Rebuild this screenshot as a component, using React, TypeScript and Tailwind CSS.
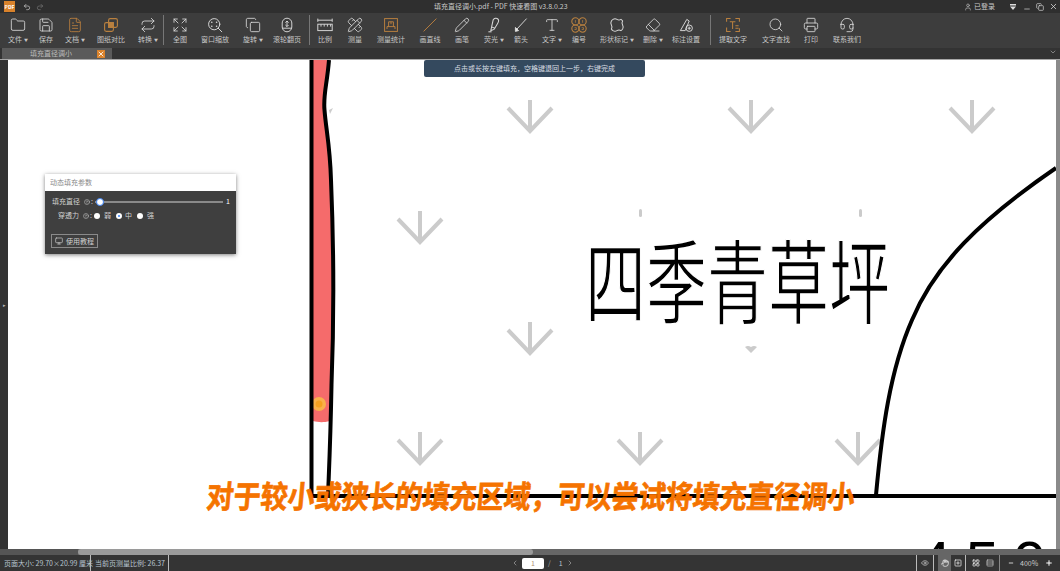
import {
  ChevronDown,
  ChevronLeft,
  ChevronRight,
  CircleHelp,
  Copy,
  Expand,
  Eraser,
  Eye,
  FileText,
  Folder,
  Hand,
  Headset,
  LayoutGrid,
  Minus,
  Monitor,
  Pencil,
  PencilRuler,
  Plus,
  Printer,
  Redo2,
  Repeat,
  Rows3,
  Save,
  Search,
  SquarePlus,
  Type,
  Undo2,
  User,
  X,
} from "lucide-react";

const FONT = "font-['Noto_Sans_CJK_SC','Noto_Sans',sans-serif]";

function CompareIcon() {
  return (
    <svg viewBox="0 0 20 20" className="h-4 w-4 fill-none stroke-[#b9803f] stroke-[1.4]">
      <rect x="2" y="7" width="11" height="11" rx="2" />
      <rect x="7" y="2" width="11" height="11" rx="2" />
      <rect x="7" y="7" width="6" height="6" className="fill-[#b9803f]" />
    </svg>
  );
}

function ZoomWindowIcon() {
  return (
    <svg viewBox="0 0 20 20" className="h-4 w-4 fill-none stroke-[#d8d8d8] stroke-[1.2]" strokeLinecap="round">
      <circle cx="9" cy="9" r="7" />
      <path d="M14 14l4.500 4.500" />
      <path d="M6 6.500h.01M12 6.500h.01M6 11.500h.01M12 11.500h.01" strokeWidth="2" />
    </svg>
  );
}

function WheelIcon() {
  return (
    <svg viewBox="0 0 20 20" className="h-4 w-4 fill-none stroke-[#d8d8d8] stroke-[1.2]">
      <rect x="4" y="1.500" width="12" height="17" rx="6" />
      <path d="M10 5v7M8 7l2-2 2 2M8 10l2 2 2-2" />
      <path d="M4 14h12" />
    </svg>
  );
}

function ScaleIcon() {
  return (
    <svg viewBox="0 0 20 20" className="h-4 w-4 fill-none stroke-[#d8d8d8] stroke-[1.2]">
      <path d="M1 4h18M1 2v4M19 2v4" />
      <rect x="1" y="9" width="18" height="8" />
      <path d="M5 9v3M9 9v3M13 9v3M17 9v3" />
    </svg>
  );
}

function StatsIcon() {
  return (
    <svg viewBox="0 0 20 20" className="h-4 w-4 fill-none stroke-[#b9803f] stroke-[1.2]">
      <rect x="2" y="2" width="16" height="16" />
      <path d="M5 15v-3h10v3M7 12V6h6v6M10 6v3" />
    </svg>
  );
}

function LineIcon() {
  return (
    <svg viewBox="0 0 20 20" className="h-4 w-4 fill-none stroke-[#b9803f] stroke-[1.2]">
      <path d="M2 18L18 2" />
    </svg>
  );
}

function HighlightIcon() {
  return (
    <svg viewBox="0 0 20 20" className="h-4 w-4 fill-none stroke-[#d8d8d8] stroke-[1.3]">
      <path d="M9 3.500c1.500-2 4-2.500 5.500-1.300s1.500 3.500.2 5.500L11 14l-4-1.500z" />
      <path d="M7 12.500L6 17l4-1.500 1-1.500" />
      <path d="M3 18.500h4" />
    </svg>
  );
}

function ArrowToolIcon() {
  return (
    <svg viewBox="0 0 20 20" className="h-4 w-4 fill-none stroke-[#d8d8d8] stroke-[1.2]">
      <path d="M5 15L17 2" />
      <path d="M3 13l4 4-4 1z" className="fill-[#e8e8e8]" />
    </svg>
  );
}

function NumberIcon() {
  return (
    <svg viewBox="0 0 20 20" className="h-[18px] w-[18px] fill-none stroke-[#b9803f] stroke-[1.2]">
      <circle cx="6" cy="6" r="4" />
      <circle cx="14" cy="6" r="4" />
      <circle cx="6" cy="14" r="4" />
      <circle cx="14" cy="14" r="4" />
      <path d="M6 4.500v3M14 4.500v3M5 13h2v2H5M13 13h2v2h-2" strokeWidth="0.8" />
    </svg>
  );
}

function ShapeIcon() {
  return (
    <svg viewBox="0 0 20 20" className="h-4 w-4 fill-none stroke-[#d8d8d8] stroke-[1.3]">
      <path d="M5 3q2.500-1.500 5 0t5 0q1.500 1 2 2-1.500 2.500 0 5t0 5q-1 1.500-2 2-2.500-1.500-5 0t-5 0q-1.500-1-2-2 1.500-2.500 0-5t0-5q1-1.500 2-2z" />
    </svg>
  );
}

function MarkSettingIcon() {
  return (
    <svg viewBox="0 0 20 20" className="h-4 w-4 fill-none stroke-[#d8d8d8] stroke-[1.2]">
      <path d="M3 17L11 3l3 2-5 12z" />
      <circle cx="14" cy="14" r="4" />
      <path d="M14 12v4M12 14h4" />
    </svg>
  );
}

function ExtractIcon() {
  return (
    <svg viewBox="0 0 20 20" className="h-4 w-4 fill-none stroke-[#b9803f] stroke-[1.3]">
      <path d="M2 6V2h5M13 2h5v4M2 13v5h5M13 18h5v-4" />
      <path d="M6 6h7M9.500 6v9M13 11h4M13 14h4" />
    </svg>
  );
}

const ICON = "h-4 w-4 text-[#d8d8d8]";
const GOLD = "h-4 w-4 text-[#b9803f]";

const TOOLS = [
  { label: "文件", caret: true, icon: <Folder className={ICON} strokeWidth={1.3} />, className: "ml-[6px]" },
  { label: "保存", icon: <Save className={ICON} strokeWidth={1.3} />, className: "ml-[4px]" },
  { label: "文档", caret: true, icon: <FileText className={GOLD} strokeWidth={1.3} />, className: "ml-[5px]" },
  { label: "图纸对比", icon: <CompareIcon />, className: "ml-[12px]" },
  { label: "转换", caret: true, icon: <Repeat className={ICON} strokeWidth={1.3} />, className: "ml-[13px]" },
  { sep: true, className: "ml-[3px]" },
  { label: "全图", icon: <Expand className={ICON} strokeWidth={1.3} />, className: "ml-[4px]" },
  { label: "窗口缩放", icon: <ZoomWindowIcon />, className: "ml-[11px]" },
  { label: "旋转", caret: true, icon: <Copy className={ICON} strokeWidth={1.3} />, className: "ml-[14px]" },
  { label: "滚轮翻页", icon: <WheelIcon />, className: "ml-[10px]" },
  { sep: true, className: "ml-[10px]" },
  { label: "比例", icon: <ScaleIcon />, className: "ml-[3px]" },
  { label: "测量", icon: <PencilRuler className={ICON} strokeWidth={1.3} />, className: "ml-[6px]" },
  { label: "测量统计", icon: <StatsIcon />, className: "ml-[12px]" },
  { label: "画直线", icon: <LineIcon />, className: "ml-[15px]" },
  { label: "画笔", icon: <Pencil className={ICON} strokeWidth={1.3} />, className: "ml-[8px]" },
  { label: "荧光", caret: true, icon: <HighlightIcon />, className: "ml-[8px]" },
  { label: "箭头", icon: <ArrowToolIcon />, className: "ml-[3px]" },
  { label: "文字", caret: true, icon: <Type className={ICON} strokeWidth={1.3} />, className: "ml-[7px]" },
  { label: "编号", icon: <NumberIcon />, className: "ml-[3px]" },
  { label: "形状标记", caret: true, icon: <ShapeIcon />, className: "ml-[14px]" },
  { label: "删除", caret: true, icon: <Eraser className={ICON} strokeWidth={1.3} />, className: "ml-[12px]" },
  { label: "标注设置", icon: <MarkSettingIcon />, className: "ml-[9px]" },
  { sep: true, className: "ml-[12px]" },
  { label: "提取文字", icon: <ExtractIcon />, className: "ml-[10px]" },
  { label: "文字查找", icon: <Search className={ICON} strokeWidth={1.3} />, className: "ml-[19px]" },
  { label: "打印", icon: <Printer className={ICON} strokeWidth={1.3} />, className: "ml-[11px]" },
  { label: "联系我们", icon: <Headset className={ICON} strokeWidth={1.3} />, className: "ml-[12px]" },
];

const WATERMARKS = [
  [530, 131],
  [751, 131],
  [972, 131],
  [420, 242],
  [530, 353],
  [420, 463],
  [640, 463],
  [858, 463],
];

function TitleBar() {
  return (
    <div className="flex h-[13px] shrink-0 items-center bg-[#2f2f2f] text-[7px] leading-none text-[#c8c8c8]">
      <div className="ml-1 flex h-[11px] w-[11px] items-center justify-center bg-[#d9822b] text-[5px] font-bold text-white">
        PDF
      </div>
      <Undo2 className="ml-[8px] h-2 w-2 text-[#cfcfcf]" />
      <Redo2 className="ml-[5px] h-2 w-2 text-[#777]" />
      <div className="ml-[390px] whitespace-nowrap">填充直径调小.pdf - PDF 快速看图 v3.8.0.23</div>
      <div className="ml-auto flex items-center">
        <User className="h-2 w-2 text-[#bbb]" />
        <span className="ml-[2px]">已登录</span>
        <svg viewBox="0 0 8 8" className="ml-[14px] h-2 w-2 fill-[#ddd]">
          <path d="M1 1h6v1.500H1zM1 3.500h6L4 7z" />
        </svg>
        <Minus className="ml-[6px] h-2 w-2 translate-y-[2px] text-[#ddd]" />
        <Copy className="ml-[5px] h-2 w-2 text-[#ddd]" />
        <X className="mx-[2px] ml-[5px] h-[9px] w-[9px] text-[#ddd]" />
      </div>
    </div>
  );
}

function Toolbar() {
  return (
    <div className="flex h-[35px] shrink-0 items-start bg-[#3d3d3d] text-[7px] leading-none text-[#c6c6c6]">
      {TOOLS.map((tool, i) =>
        tool.sep ? (
          <div key={i} className={`mt-[2px] h-[30px] w-px shrink-0 bg-[#777] ${tool.className}`} />
        ) : (
          <div key={i} className={`flex w-6 shrink-0 flex-col items-center whitespace-nowrap ${tool.className}`}>
            <div className="mt-[4px] flex h-4 items-center">{tool.icon}</div>
            <div className="mt-[3px] flex items-center">
              {tool.label}
              {tool.caret && <span className="ml-[2px] text-[4px]">▼</span>}
            </div>
          </div>
        ),
      )}
    </div>
  );
}

function TabStrip() {
  return (
    <div className="flex h-3 shrink-0 border-b border-[#a8a8a8] bg-[#333] text-[7px] leading-none text-[#bbb]">
      <div className="ml-[2px] flex w-[110px] items-center bg-[#5a5a5a]">
        <span className="ml-[28px]">填充直径调小</span>
        <div className="ml-auto mr-[7px] flex h-2 w-2 items-center justify-center bg-[#d9822b]">
          <X className="h-2 w-2 text-white" strokeWidth={2.5} />
        </div>
      </div>
      <ChevronDown className="ml-auto mr-[1px] h-2 w-3 text-[#aaa]" />
    </div>
  );
}

function Drawing() {
  return (
    <svg viewBox="8 60 1048 489" className="absolute inset-0 h-full w-full">
      {WATERMARKS.map(([x, y]) => (
        <path
          key={`${x}-${y}`}
          d={`M${x} ${y - 31}V${y}M${x - 22} ${y - 23}L${x} ${y}L${x + 22} ${y - 23}`}
          fill="none"
          stroke="#cbcbcb"
          strokeWidth="4"
        />
      ))}
      <rect x="639" y="209" width="3" height="8" rx="1.500" fill="#cbcbcb" />
      <rect x="859" y="209" width="3" height="8" rx="1.500" fill="#cbcbcb" />
      <path d="M745 347q3-2 6 0q3-2 6 0l-6 6z" fill="#cbcbcb" />
      <path d="M329 110l4-2-3 6z" fill="#cbcbcb" />

      {/* filled area */}
      <path
        d="M313 60H329C327 85 323 95 324.500 110C326 130 330 145 331 180C333.500 240 334 320 331.500 385L330 421C322 423 318 422 313 421Z"
        fill="#f56b6b"
      />
      <circle cx="319" cy="404" r="7" fill="#f9b04a" />
      <circle cx="319" cy="404" r="3.500" fill="#f5a020" />

      {/* outlines */}
      <path d="M311.500 60V496H1056" fill="none" stroke="#000" strokeWidth="4" />
      <path
        d="M329 60C327 85 323 95 324.500 110C326 130 330 145 331 180C333.500 240 334 320 331.500 385C330.500 440 329 470 328 496"
        fill="none"
        stroke="#000"
        strokeWidth="4"
      />
      <path
        d="M876 495C882 430 890 370 912 320C935 265 980 220 1056 168"
        fill="none"
        stroke="#000"
        strokeWidth="4"
      />
    </svg>
  );
}

function ParamPanel() {
  return (
    <div className="absolute left-[37px] top-[114px] h-[80px] w-[191px] bg-[#3f3f3f] text-[7px] leading-none text-[#d0d0d0] shadow-[0_1px_4px_rgba(0,0,0,0.5)]">
      <div className="flex h-[17px] items-center bg-white pl-[5px] text-[#888]">动态填充参数</div>
      <div className="ml-[7px] mt-[7px] flex items-center">
        <span>填充直径</span>
        <CircleHelp className="ml-[4px] h-[6px] w-[6px]" />
        <span className="ml-[1px] mr-[2px]">:</span>
        <div className="relative h-[2px] w-[128px] bg-[#8a8a8a]">
          <div className="absolute left-[1px] top-[-3px] h-2 w-2 rounded-full border border-[#3b82f6] bg-white" />
        </div>
        <span className="ml-[3px] text-white">1</span>
      </div>
      <div className="ml-[13px] mt-[7px] flex items-center">
        <span>穿透力</span>
        <CircleHelp className="ml-[4px] h-[6px] w-[6px]" />
        <span className="ml-[1px] mr-[2px]">:</span>
        <div className="h-[6px] w-[6px] rounded-full bg-white" />
        <span className="ml-[4px]">弱</span>
        <div className="ml-[5px] h-[6px] w-[6px] rounded-full border-2 border-white bg-[#3b82f6]" />
        <span className="ml-[3px]">中</span>
        <div className="ml-[5px] h-[6px] w-[6px] rounded-full bg-white" />
        <span className="ml-[4px]">强</span>
      </div>
      <div className="ml-[6px] mt-[15px] flex h-[14px] w-[47px] items-center justify-center gap-[3px] border border-[#8a8a8a]">
        <Monitor className="h-2 w-2" />
        使用教程
      </div>
    </div>
  );
}

function Canvas() {
  return (
    <div className="relative min-w-0 flex-1 overflow-hidden bg-white">
      <Drawing />

      {/* handwritten lettering on the sheet */}
      <div className="absolute left-[577px] top-[187px] flex scale-y-[1.5] font-['Noto_Sans_CJK_SC',sans-serif] text-[61px] leading-none text-black [-webkit-text-stroke:1px_white]">
        四季青草坪
      </div>
      <div className="absolute left-[910px] top-[473px] flex gap-[14px] font-['Liberation_Sans',sans-serif] text-[60px] leading-none text-black">
        <span>4</span>
        <span>5</span>
        <span>0</span>
      </div>

      <div className="absolute left-[199px] top-[421px] -skew-x-[6deg] scale-y-[1.15] whitespace-nowrap text-[27px] font-bold leading-none text-[#f57300] [-webkit-text-stroke:0.6px_#f57300]">
        对于较小或狭长的填充区域，可以尝试将填充直径调小
      </div>

      <div className="absolute left-[416px] top-0 flex h-[17px] w-[221px] items-center justify-center rounded-[2px] bg-[#34495e] text-[7px] leading-none text-[#d8dde2]">
        点击或长按左键填充，空格键退回上一步，右键完成
      </div>

      <ParamPanel />
    </div>
  );
}

function StatusBar() {
  return (
    <div className="flex h-4 shrink-0 items-center bg-[#343434] text-[7px] leading-none text-[#b8c4d0]">
      <div className="ml-1 w-[86px] whitespace-nowrap">页面大小: 29.70×20.99 厘米</div>
      <div className="h-full w-px bg-[#bbb]" />
      <div className="ml-[4px] w-[73px] whitespace-nowrap">当前页测量比例: 26.37</div>
      <div className="h-full w-px bg-[#bbb]" />
      <ChevronLeft className="ml-[342px] h-2 w-2 text-[#aaa]" />
      <div className="ml-[3px] flex h-[11px] w-[22px] items-center justify-center rounded-[2px] bg-white text-[#b09070]">1</div>
      <span className="ml-[4px] text-[#aaa]">/</span>
      <span className="ml-[8px]">1</span>
      <ChevronRight className="ml-[3px] h-2 w-2 text-[#aaa]" />
      <div className="ml-auto flex h-full items-center text-[#ccc]">
        <div className="h-full w-px bg-[#bbb]" />
        <div className="flex w-4 justify-center">
          <Eye className="h-2 w-2" />
        </div>
        <div className="h-full w-px bg-[#bbb]" />
        <div className="ml-[4px] flex h-full w-[13px] items-center justify-center bg-[#666]">
          <Hand className="h-2 w-2 text-white" />
        </div>
        <div className="flex w-[14px] justify-center">
          <SquarePlus className="h-2 w-2 text-white" />
        </div>
        <div className="h-full w-px bg-[#bbb]" />
        <div className="ml-[3px] flex w-[14px] justify-center">
          <LayoutGrid className="h-2 w-2 text-white" />
        </div>
        <div className="flex w-[14px] justify-center">
          <Rows3 className="h-2 w-2" />
        </div>
        <div className="ml-[2px] h-full w-px bg-[#888]" />
        <Minus className="ml-[8px] h-[6px] w-[6px] text-white" strokeWidth={3} />
        <span className="ml-[6px] w-[20px] whitespace-nowrap">400%</span>
        <Plus className="ml-[5px] mr-[7px] h-2 w-2 text-white" strokeWidth={3} />
      </div>
    </div>
  );
}

export default function App() {
  return (
    <div className={`flex h-screen w-screen flex-col overflow-hidden bg-[#333] ${FONT}`}>
      <TitleBar />
      <Toolbar />
      <TabStrip />
      <div className="flex min-h-0 flex-1">
        <div className="flex w-2 shrink-0 items-center justify-center bg-[#333]">
          <span className="text-[5px] text-[#bbb]">▸</span>
        </div>
        <Canvas />
        <div className="w-1 shrink-0 bg-[#8a8a8a]" />
      </div>
      <div className="flex h-[6px] shrink-0 bg-[#666]">
        <div className="w-[78px] bg-[#555]" />
        <div className="w-[455px] rounded-[3px] bg-[#9a9a9a]" />
      </div>
      <StatusBar />
    </div>
  );
}
